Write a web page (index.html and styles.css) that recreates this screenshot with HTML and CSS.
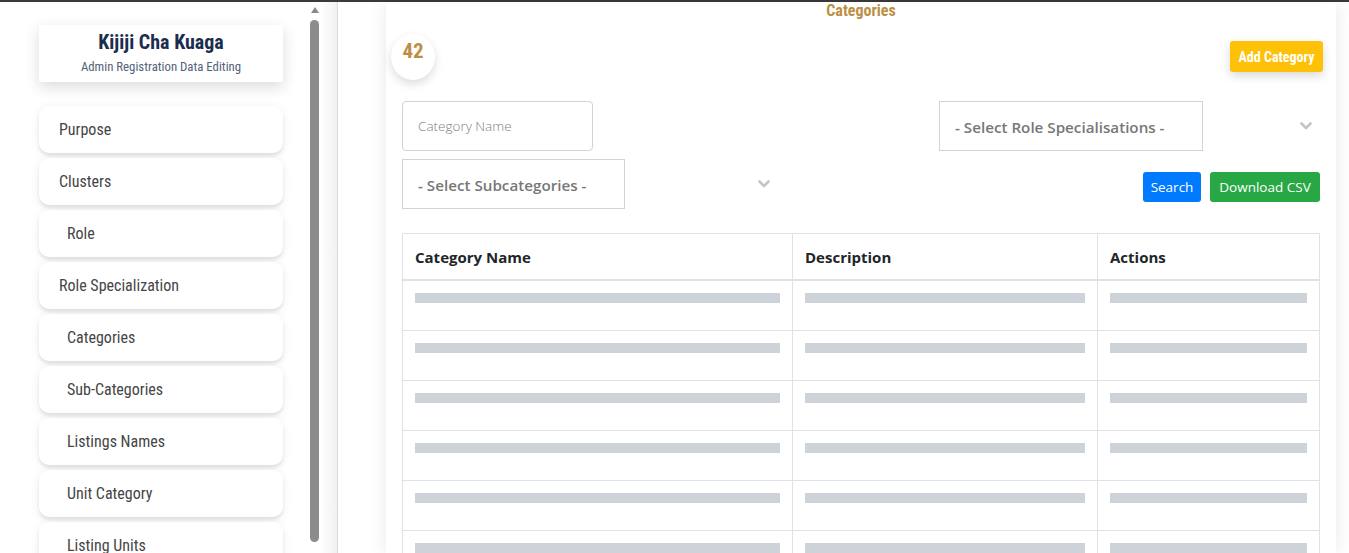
FILE: index.html
```html
<!DOCTYPE html>
<html lang="en">
<head>
<meta charset="utf-8">
<title>Categories - Kijiji Cha Kuaga</title>
<link rel="stylesheet" href="styles.css">
</head>
<body>
<div class="app">
  <aside class="sidebar">
    <div class="side-col">
      <div class="brand">
        <div class="brand-title">Kijiji Cha Kuaga</div>
        <div class="brand-sub">Admin Registration Data Editing</div>
      </div>
      <nav class="nav">
        <a class="nav-item">Purpose</a>
        <a class="nav-item">Clusters</a>
        <a class="nav-item sub">Role</a>
        <a class="nav-item">Role Specialization</a>
        <a class="nav-item sub">Categories</a>
        <a class="nav-item sub">Sub-Categories</a>
        <a class="nav-item sub">Listings Names</a>
        <a class="nav-item sub">Unit Category</a>
        <a class="nav-item sub">Listing Units</a>
      </nav>
    </div>
    <div class="scrollbar">
      <span class="sb-arrow"></span>
      <span class="sb-thumb"></span>
    </div>
    <div class="gutter"></div>
  </aside>

  <main class="main">
    <section class="card">
      <h2 class="card-title">Categories</h2>
      <div class="card-head">
        <div class="count">42</div>
        <button class="btn btn-add">Add Category</button>
      </div>

      <div class="filters">
        <div class="f-cell">
          <input class="input" type="text" placeholder="Category Name">
        </div>
        <div class="f-cell">
          <div class="select-wrap role">
            <div class="select-box role-box">- Select Role Specialisations -</div>
            <svg class="chev" width="12" height="8" viewBox="0 0 12 8"><polyline points="1.5,1.5 6,6 10.5,1.5" fill="none" stroke="#c4c4c4" stroke-width="2.6" stroke-linecap="round" stroke-linejoin="round"/></svg>
          </div>
        </div>
        <div class="f-cell">
          <div class="select-wrap subcat">
            <div class="select-box sub-box">- Select Subcategories -</div>
            <svg class="chev" width="12" height="8" viewBox="0 0 12 8"><polyline points="1.5,1.5 6,6 10.5,1.5" fill="none" stroke="#c4c4c4" stroke-width="2.6" stroke-linecap="round" stroke-linejoin="round"/></svg>
          </div>
        </div>
        <div class="f-cell actions">
          <button class="btn btn-search">Search</button>
          <button class="btn btn-csv">Download CSV</button>
        </div>
      </div>

      <table class="table">
        <thead>
          <tr>
            <th class="c1">Category Name</th>
            <th class="c2">Description</th>
            <th class="c3">Actions</th>
          </tr>
        </thead>
        <tbody>
          <tr><td><span class="bar"></span></td><td><span class="bar"></span></td><td><span class="bar"></span></td></tr>
          <tr><td><span class="bar"></span></td><td><span class="bar"></span></td><td><span class="bar"></span></td></tr>
          <tr><td><span class="bar"></span></td><td><span class="bar"></span></td><td><span class="bar"></span></td></tr>
          <tr><td><span class="bar"></span></td><td><span class="bar"></span></td><td><span class="bar"></span></td></tr>
          <tr><td><span class="bar"></span></td><td><span class="bar"></span></td><td><span class="bar"></span></td></tr>
          <tr><td><span class="bar"></span></td><td><span class="bar"></span></td><td><span class="bar"></span></td></tr>
          <tr><td><span class="bar"></span></td><td><span class="bar"></span></td><td><span class="bar"></span></td></tr>
        </tbody>
      </table>
    </section>
  </main>
</div>
</body>
</html>
```

FILE: styles.css
```css
* { box-sizing: border-box; }

html, body {
  margin: 0;
  height: 100%;
  overflow: hidden;
  background: #fff;
}

body {
  font-family: "Open Sans", "Noto Sans", sans-serif;
  color: #212529;
}

.app {
  display: flex;
  height: 100%;
  border-top: 2px solid #3a3a3a;
}

/* ---------- Sidebar ---------- */
.sidebar {
  display: flex;
  flex: 0 0 338px;
  padding-left: 39px;
  border-right: 1px solid #dcdcdc;
  overflow: hidden;
  background: #fff;
  font-family: "Roboto Condensed", "Liberation Sans Narrow", "DejaVu Sans Condensed", Roboto, sans-serif;
  font-stretch: condensed;
}

.side-col {
  flex: 0 0 244px;
  padding-top: 23px;
  display: flex;
  flex-direction: column;
}

.side-col > * { flex-shrink: 0; }

.brand {
  background: #fff;
  height: 57px;
  text-align: center;
  box-shadow: 0 5px 14px rgba(0, 0, 0, 0.14);
  padding-top: 5px;
  margin-bottom: 24px;
}

.brand-title {
  font-size: 20px;
  font-weight: 700;
  color: #1c2d4d;
  line-height: 24px;
}

.brand-sub {
  font-size: 12.8px;
  color: #53627a;
  line-height: 16px;
  margin-top: 5px;
}

.nav {
  display: flex;
  flex-direction: column;
  gap: 5px;
}

.nav-item {
  display: flex;
  align-items: center;
  flex: 0 0 47px;
  padding-left: 20px;
  background: #fff;
  border-radius: 10px;
  font-size: 16px;
  color: #454545;
  box-shadow: 0 3px 3px rgba(0, 0, 0, 0.07), 0 2px 10px rgba(0, 0, 0, 0.08);
}

.nav-item.sub { padding-left: 28px; }

.scrollbar {
  flex: 0 0 11px;
  margin-left: 26px;
  display: flex;
  flex-direction: column;
  align-items: center;
  padding-top: 5px;
}

.sb-arrow {
  flex-shrink: 0;
  width: 0;
  height: 0;
  border-left: 4px solid transparent;
  border-right: 4px solid transparent;
  border-bottom: 6px solid #8a8a8a;
}

.sb-thumb {
  flex-shrink: 0;
  width: 9px;
  height: 522px;
  margin-top: 7px;
  border-radius: 5px;
  background: #8c8c8c;
}

.gutter {
  flex: 1;
  background: linear-gradient(to right, #ffffff, #f1f1f1);
}

/* ---------- Main ---------- */
.main {
  flex: 1;
  padding: 0 13px 0 48px;
  background: #fff;
}

.card {
  height: 100%;
  background: #fff;
  padding: 0 16px;
  box-shadow: 0 0 18px rgba(0, 0, 0, 0.09);
}

.card-title {
  margin: 0;
  text-align: center;
  font-family: "Roboto Condensed", "Liberation Sans Narrow", "DejaVu Sans Condensed", Roboto, sans-serif;
  font-stretch: condensed;
  font-size: 16px;
  font-weight: 700;
  line-height: 18px;
  color: #bb8f45;
}

.card-head {
  display: flex;
  justify-content: space-between;
  align-items: center;
  margin: 13px -3px 0 -11px;
  height: 47px;
}

.count {
  width: 44px;
  height: 46px;
  border-radius: 50%;
  background: #fff;
  box-shadow: 0 4px 10px rgba(0, 0, 0, 0.14);
  display: flex;
  align-items: flex-start;
  justify-content: center;
  padding-top: 5px;
  font-family: "Roboto Condensed", "Liberation Sans Narrow", "DejaVu Sans Condensed", Roboto, sans-serif;
  font-stretch: condensed;
  font-size: 21px;
  font-weight: 700;
  color: #bb8f45;
}

.btn {
  border: 0;
  border-radius: 3px;
  color: #fff;
  cursor: pointer;
  font-family: "Open Sans", "Noto Sans", sans-serif;
  font-size: 13.5px;
  padding: 0;
  height: 30px;
}

.btn-add {
  background: #ffc107;
  height: 31px;
  width: 93px;
  font-family: "Roboto Condensed", "Liberation Sans Narrow", "DejaVu Sans Condensed", Roboto, sans-serif;
  font-stretch: condensed;
  font-weight: 700;
  font-size: 14px;
  box-shadow: 0 4px 10px rgba(0, 0, 0, 0.15);
}

.btn-search { background: #007bff; width: 58px; }
.btn-csv { background: #28a745; width: 110px; }

/* ---------- Filters ---------- */
.filters {
  display: grid;
  grid-template-columns: 537px 1fr;
  grid-auto-rows: 50px;
  row-gap: 8px;
  margin-top: 21px;
}

.f-cell { display: flex; }

.input {
  width: 191px;
  height: 50px;
  border: 1px solid #ced4da;
  border-radius: 4px;
  padding: 0 15px;
  font-family: "Open Sans", "Noto Sans", sans-serif;
  font-size: 13.5px;
  font-weight: 300;
  color: #495057;
}

.input::placeholder { color: #7b7f84; }

.select-wrap {
  display: flex;
  align-items: center;
  justify-content: space-between;
}

.select-wrap.role { width: 381px; padding-right: 8px; }
.select-wrap.subcat { width: 378px; padding-right: 10px; }

.select-box {
  height: 50px;
  border: 1px solid #ced4da;
  display: flex;
  align-items: center;
  padding: 1px 0 0 15px;
  font-size: 15.2px;
  font-weight: 600;
  color: #777;
  white-space: nowrap;
  overflow: hidden;
}

.role-box { width: 264px; }
.sub-box { width: 223px; }

.actions {
  justify-content: flex-end;
  align-items: flex-end;
  gap: 9px;
  padding-bottom: 7px;
}

/* ---------- Table ---------- */
.table {
  width: 100%;
  margin-top: 24px;
  border-collapse: collapse;
  border: 1px solid #dee2e6;
}

.table th,
.table td {
  border: 1px solid #dee2e6;
  text-align: left;
  vertical-align: top;
}

.table th {
  padding: 12px 12px 11px;
  font-size: 15px;
  font-weight: 700;
  line-height: 22px;
  color: #212529;
  border-bottom-width: 2px;
}

.table th.c1 { width: 390px; }
.table th.c2 { width: 305px; }

.table td {
  padding: 12px 12px 27px;
}

.bar {
  display: block;
  height: 10px;
  background: #ced3da;
}
```
